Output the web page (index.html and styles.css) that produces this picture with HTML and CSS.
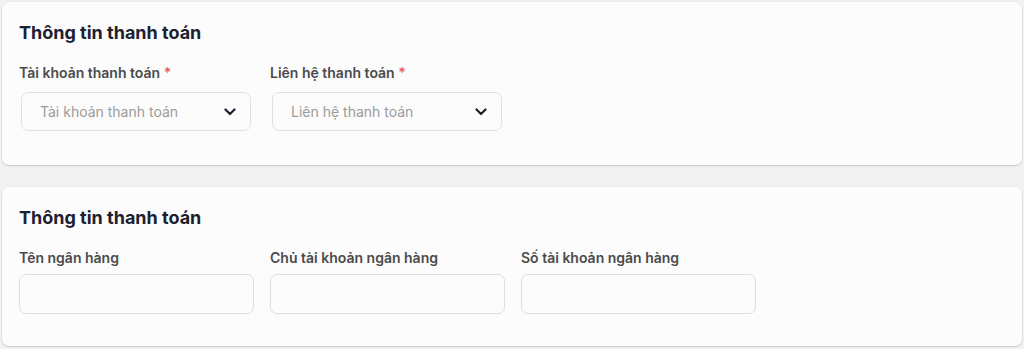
FILE: index.html
```html
<!DOCTYPE html>
<html lang="vi">
<head>
<meta charset="utf-8">
<link rel="stylesheet" href="styles.css">
</head>
<body>
<div class="page">
  <section class="card card-top">
    <h2 class="title">Thông tin thanh toán</h2>
    <div class="grid">
      <div class="field">
        <label class="label">Tài khoản thanh toán <span class="req">*</span></label>
        <div class="select">
          <span class="placeholder">Tài khoản thanh toán</span>
          <svg class="chev" width="12" height="8" viewBox="0 0 12 8"><path d="M1.5 1.5 L6 6 L10.5 1.5" fill="none" stroke="#1c2130" stroke-width="2.2" stroke-linecap="round" stroke-linejoin="round"/></svg>
        </div>
      </div>
      <div class="field">
        <label class="label">Liên hệ thanh toán <span class="req">*</span></label>
        <div class="select">
          <span class="placeholder">Liên hệ thanh toán</span>
          <svg class="chev" width="12" height="8" viewBox="0 0 12 8"><path d="M1.5 1.5 L6 6 L10.5 1.5" fill="none" stroke="#1c2130" stroke-width="2.2" stroke-linecap="round" stroke-linejoin="round"/></svg>
        </div>
      </div>
    </div>
  </section>
  <section class="card card-bottom">
    <h2 class="title">Thông tin thanh toán</h2>
    <div class="grid">
      <div class="field">
        <label class="label">Tên ngân hàng</label>
        <div class="input"></div>
      </div>
      <div class="field">
        <label class="label">Chủ tài khoản ngân hàng</label>
        <div class="input"></div>
      </div>
      <div class="field">
        <label class="label">Số tài khoản ngân hàng</label>
        <div class="input"></div>
      </div>
    </div>
  </section>
</div>
</body>
</html>
```

FILE: styles.css
```css
* { box-sizing: border-box; }
html, body {
  margin: 0;
  background: #f2f2f2;
}
body {
  font-family: "Inter", "Noto Sans", sans-serif;
  width: 1024px;
  height: 349px;
  overflow: hidden;
}
.page {
  padding: 2px 2px 0 2px;
  display: flex;
  flex-direction: column;
  gap: 22px;
}
.card {
  background: #fcfcfc;
  border-radius: 7px;
  box-shadow: 0 1px 2px rgba(0,0,0,0.16), 0 0 0 1px rgba(0,0,0,0.025);
  padding: 19px 17px 0 17px;
}
.card-top { height: 163px; }
.card-bottom { height: 159px; }
.title {
  margin: 0;
  font-size: 18px;
  line-height: 24px;
  font-weight: 700;
  color: #1c2130;
}
.grid {
  display: grid;
  grid-template-columns: repeat(3, 235px);
  column-gap: 16px;
}
.card-top .grid { margin-top: 18px; }
.card-bottom .grid { margin-top: 18px; }
.field {
  display: flex;
  flex-direction: column;
}
.label {
  font-size: 14px;
  line-height: 20px;
  font-weight: 600;
  color: #4b4b4b;
}
.req { color: #f05a5a; }
.select {
  margin: 9px 0 0 2px;
  width: 230px;
  height: 39px;
  border: 1px solid #e1e1e1;
  border-radius: 7px;
  display: flex;
  align-items: center;
  justify-content: space-between;
  padding: 0 14px 0 18px;
}
.placeholder {
  font-size: 14px;
  color: #9b9b9b;
}
.chev { display: block; }
.input {
  margin-top: 6px;
  width: 235px;
  height: 40px;
  border: 1px solid #dedede;
  border-radius: 7px;
}
```
